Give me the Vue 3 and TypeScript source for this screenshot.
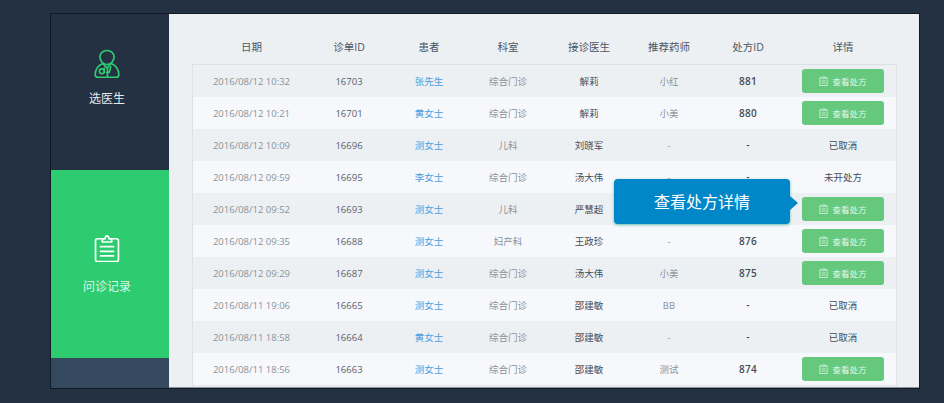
<template>
  <div class="page">
    <div class="window">
      <aside class="sidebar">
        <div class="nav-item">
          <svg class="nav-icon" width="26" height="30" viewBox="0 0 28 32" fill="none" stroke="#2ecc71" stroke-width="1.8" stroke-linecap="round" stroke-linejoin="round">
            <path d="M14 1.500c4.400 0 7.600 2.900 7.600 6.800 0 4.400-3.300 8.200-7.600 8.200s-7.600-3.800-7.600-8.200c0-3.900 3.200-6.800 7.600-6.800z" />
            <path d="M9.500 15.500C4.500 17.500 1.300 22 1.300 27.600c0 1.600 1 2.700 2.800 2.700h19.800c1.800 0 2.800-1.100 2.800-2.700 0-5.600-3.200-10.100-8.200-12.100" />
            <path d="M9.500 15.500 14 20.500l4.500-5" />
            <path d="M11 20.500v3.200M14.500 21v9M18 19l-1.500 6h-3" />
            <circle cx="8.500" cy="23.800" r="2.600" />
          </svg>
          <span class="nav-label nav-label-dark">选医生</span>
        </div>
        <div class="nav-item nav-item-active">
          <svg class="nav-icon" width="26" height="27" viewBox="0 0 27 29" fill="none" stroke="#fff" stroke-width="1.8" stroke-linecap="round" stroke-linejoin="round">
            <path d="M8.500 4H3.200C2 4 1.200 4.800 1.200 6v20.500c0 1.200.8 2 2 2h20.600c1.200 0 2-.8 2-2V6c0-1.200-.8-2-2-2h-5.300" />
            <path d="M8.500 7.500V4.200h2.800C11.600 2.300 12.400 1 13.500 1s1.900 1.300 2.200 3.200h2.800v3.300z" />
            <path d="M6.500 12.500h14M6.500 17.500h14M6.500 22.500h14" />
          </svg>
          <span class="nav-label">问诊记录</span>
        </div>
        <div class="sidebar-foot"></div>
      </aside>

      <main class="content">
        <div class="table-head">
          <div v-for="title in columns" :key="title" class="cell">{{ title }}</div>
        </div>
        <div class="table-body">
          <div v-for="row in rows" :key="row.id" class="table-row">
            <div class="cell cell-muted">{{ row.date }}</div>
            <div class="cell cell-id">{{ row.id }}</div>
            <div class="cell cell-link">{{ row.patient }}</div>
            <div class="cell cell-muted">{{ row.dept }}</div>
            <div class="cell cell-dark">{{ row.doctor }}</div>
            <div class="cell cell-muted">{{ row.pharmacist }}</div>
            <div class="cell cell-dark cell-num">{{ row.rxId }}</div>
            <div class="cell cell-dark">
              <button v-if="row.canView" class="view-btn" type="button">
                <svg width="9" height="10" viewBox="0 0 11 12" fill="none" stroke="#d9f3df" stroke-width="1">
                  <path d="M3.500 2H1v9.500h9V2H7.500" />
                  <path d="M3.500 1h4v2h-4zM3 6h5M3 8.500h5" />
                </svg>
                查看处方
              </button>
              <template v-else>{{ row.status }}</template>
            </div>
          </div>
          <div class="tip">查看处方详情</div>
        </div>
      </main>
    </div>
  </div>
</template>

<script setup lang="ts">
interface Row {
  date: string
  id: number
  patient: string
  dept: string
  doctor: string
  pharmacist: string
  rxId: string
  canView: boolean
  status?: string
}

const columns = ['日期', '诊单ID', '患者', '科室', '接诊医生', '推荐药师', '处方ID', '详情']

const rows: Row[] = [
  { date: '2016/08/12 10:32', id: 16703, patient: '张先生', dept: '综合门诊', doctor: '解莉', pharmacist: '小红', rxId: '881', canView: true },
  { date: '2016/08/12 10:21', id: 16701, patient: '黄女士', dept: '综合门诊', doctor: '解莉', pharmacist: '小美', rxId: '880', canView: true },
  { date: '2016/08/12 10:09', id: 16696, patient: '测女士', dept: '儿科', doctor: '刘晓军', pharmacist: '-', rxId: '-', canView: false, status: '已取消' },
  { date: '2016/08/12 09:59', id: 16695, patient: '李女士', dept: '综合门诊', doctor: '汤大伟', pharmacist: '-', rxId: '-', canView: false, status: '未开处方' },
  { date: '2016/08/12 09:52', id: 16693, patient: '测女士', dept: '儿科', doctor: '严慧超', pharmacist: '', rxId: '', canView: true },
  { date: '2016/08/12 09:35', id: 16688, patient: '测女士', dept: '妇产科', doctor: '王政珍', pharmacist: '-', rxId: '876', canView: true },
  { date: '2016/08/12 09:29', id: 16687, patient: '测女士', dept: '综合门诊', doctor: '汤大伟', pharmacist: '小美', rxId: '875', canView: true },
  { date: '2016/08/11 19:06', id: 16665, patient: '测女士', dept: '综合门诊', doctor: '邵建敏', pharmacist: 'BB', rxId: '-', canView: false, status: '已取消' },
  { date: '2016/08/11 18:58', id: 16664, patient: '黄女士', dept: '综合门诊', doctor: '邵建敏', pharmacist: '-', rxId: '-', canView: false, status: '已取消' },
  { date: '2016/08/11 18:56', id: 16663, patient: '测女士', dept: '综合门诊', doctor: '邵建敏', pharmacist: '测试', rxId: '874', canView: true },
]
</script>

<style scoped>
.page {
  width: 944px;
  height: 403px;
  padding: 13px 0 0 50px;
  box-sizing: border-box;
  background: #233142;
  font-family: "Open Sans", "Noto Sans CJK SC", sans-serif;
  overflow: hidden;
}

.window {
  display: flex;
  width: 870px;
  height: 376px;
  box-sizing: border-box;
  border: 1px solid #111a26;
}

/* 左侧导航 */
.sidebar {
  display: flex;
  flex-direction: column;
  width: 118px;
  flex-shrink: 0;
  background: #233142;
}

.nav-item {
  display: flex;
  flex-direction: column;
  align-items: center;
  height: 156px;
  padding: 35px 6px 0 0;
  box-sizing: border-box;
}

.nav-item-active {
  height: 188px;
  padding-top: 65px;
  background: #2ecc71;
}

.nav-icon {
  display: block;
}

.nav-label {
  margin-top: 16px;
  font-size: 12px;
  line-height: 18px;
  color: #dff7e8;
}

.nav-label-dark {
  margin-top: 11px;
  color: #e4eaf0;
}

.sidebar-foot {
  flex: 1;
  background: #34495e;
}

/* 右侧表格 */
.content {
  flex: 1;
  padding: 0 22px 0 23px;
  background: #edf0f3;
  border-bottom: 1px solid #8d9298;
}

.table-head,
.table-row {
  display: grid;
  grid-template-columns: 117px 78px 82px 76px 86px 74px 84px 1fr;
  align-items: center;
  text-align: center;
}

.table-head {
  height: 50px;
  padding: 15px 1px 0;
  box-sizing: border-box;
  font-size: 10.5px;
  color: #4a5563;
}

.table-body {
  position: relative;
  height: 322px;
  box-sizing: border-box;
  border: 1px solid #dde1e6;
  border-bottom-color: #e3e7ec;
}

.table-row {
  height: 32px;
  font-size: 9.5px;
  background: #edf0f3;
}

.table-row:nth-child(even) {
  background: #f6f8fb;
}

.cell-muted {
  color: #8c9197;
}

.cell-id {
  color: #5a626d;
}

.cell-dark {
  color: #444c58;
}

.cell-num {
  font-weight: 600;
  font-size: 10px;
  letter-spacing: 0.2px;
}

.cell-link {
  color: #4a9fdf;
}

.view-btn {
  display: inline-flex;
  align-items: center;
  justify-content: center;
  gap: 4px;
  width: 82px;
  height: 24px;
  padding: 0;
  border: none;
  border-radius: 3px;
  background: #66c87d;
  color: #e4f7e9;
  font-family: inherit;
  font-size: 8.5px;
}

.tip {
  position: absolute;
  left: 421px;
  top: 114px;
  display: flex;
  align-items: center;
  justify-content: center;
  width: 176px;
  height: 45px;
  padding-bottom: 2px;
  box-sizing: border-box;
  border-radius: 4px;
  background: #0087c8;
  box-shadow: 0 1px 3px rgba(46, 170, 150, 0.7);
  color: #fff;
  font-size: 16px;
}

.tip::after {
  content: "";
  position: absolute;
  right: -8px;
  top: 17px;
  border-left: 8px solid #0087c8;
  border-top: 7px solid transparent;
  border-bottom: 7px solid transparent;
}
</style>

<style>
html,
body {
  margin: 0;
  background: #233142;
}
</style>
